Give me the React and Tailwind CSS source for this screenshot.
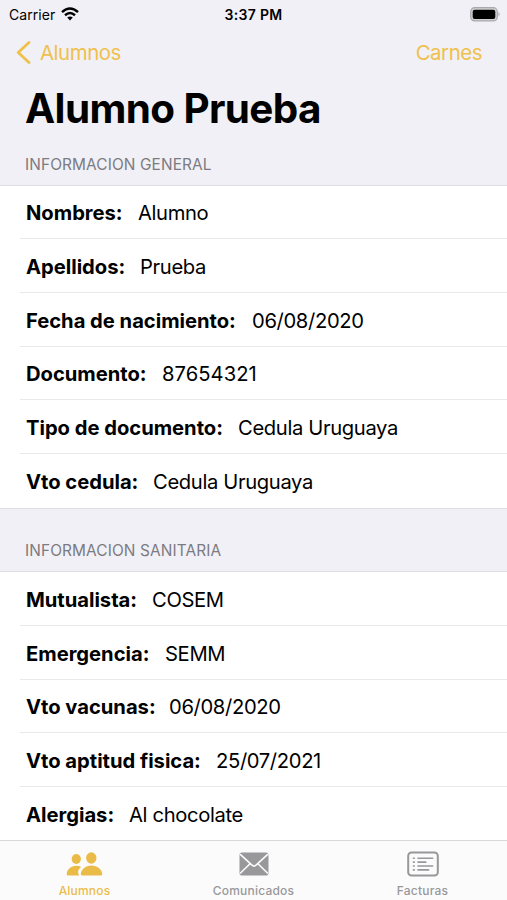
const general = [
  { label: "Nombres:", value: "Alumno", width: "w-[112px]" },
  { label: "Apellidos:", value: "Prueba", width: "w-[114px]" },
  { label: "Fecha de nacimiento:", value: "06/08/2020", width: "w-[226px]" },
  { label: "Documento:", value: "87654321", width: "w-[136px]", spacing: "tracking-[0.05px]" },
  { label: "Tipo de documento:", value: "Cedula Uruguaya", width: "w-[212px]" },
  { label: "Vto cedula:", value: "Cedula Uruguaya", width: "w-[127px]" },
];

const health = [
  { label: "Mutualista:", value: "COSEM", width: "w-[126px]" },
  { label: "Emergencia:", value: "SEMM", width: "w-[139px]" },
  { label: "Vto vacunas:", value: "06/08/2020", width: "w-[143px]" },
  { label: "Vto aptitud fisica:", value: "25/07/2021", width: "w-[190px]" },
  { label: "Alergias:", value: "Al chocolate", width: "w-[103px]" },
];

function Row({ label, value, width, last, spacing = "tracking-[-0.35px]" }) {
  return (
    <div className="h-[53.7px] shrink-0 pl-5">
      <div className={`flex h-full items-center pl-[6px] pt-[3px] text-[20.2px] ${last ? "" : "border-b border-[#e9e9eb]"}`}>
        <span className={`${width} shrink-0 whitespace-nowrap font-bold tracking-[-0.02px]`}>{label}</span>
        <span className={`whitespace-nowrap ${spacing}`}>{value}</span>
      </div>
    </div>
  );
}

function Rows({ items }) {
  return (
    <div className="flex flex-col border-y border-[#dedee2] bg-white">
      {items.map((item, i) => (
        <Row key={item.label} {...item} last={i === items.length - 1} />
      ))}
    </div>
  );
}

function Tab({ label, color, children }) {
  return (
    <div className={`flex flex-1 flex-col items-center pt-[8px] ${color}`}>
      <div className="flex h-[30px] items-center justify-center">{children}</div>
      <span className="mt-[4px] text-[12px] font-medium leading-[16px] tracking-[0.2px]">{label}</span>
    </div>
  );
}

export default function App() {
  return (
    <div className="flex h-[900px] w-[507px] flex-col overflow-hidden bg-[#f1f0f6] font-['Inter','Liberation_Sans',sans-serif] text-black">
      <div className="grid h-[28px] shrink-0 grid-cols-3 items-center pl-[7px] pr-[7px] text-[14px]">
        <div className="flex items-center gap-[6px] pl-[2px]">
          <span className="tracking-[0.05px]">Carrier</span>
          <svg width="18" height="14" viewBox="0 0 18 14" fill="none" stroke="currentColor" strokeWidth="2.5">
            <path d="M1 5.1Q9-2.1 17 5.1M4 8.3Q9 3.8 14 8.3" />
            <path d="M6.2 10.6Q9 8.4 11.8 10.6L9 13.5Z" fill="currentColor" stroke="none" />
          </svg>
        </div>
        <span className="text-center font-semibold tracking-[0.3px]">3:37 PM</span>
        <svg className="justify-self-end" width="30" height="15" viewBox="0 0 30 15">
          <rect x=".7" y=".7" width="26.6" height="13.2" rx="4" fill="#d0d0d3" stroke="#a9a9ad" strokeWidth="1.2" />
          <rect x="2.7" y="2.7" width="22.6" height="9.2" rx="2" />
          <path d="M28.5 5.1Q30.8 7.3 28.5 9.5Z" fill="#a9a9ad" />
        </svg>
      </div>
      <div className="flex h-[49px] shrink-0 items-center justify-between pl-4 pr-[25px] pt-[1px] text-[20.4px] tracking-[-0.45px] text-[#efc04c]">
        <div className="flex items-center gap-[9px]">
          <svg width="15" height="24" viewBox="0 0 15 24" fill="none" stroke="currentColor" strokeWidth="2.8" strokeLinecap="round" strokeLinejoin="round">
            <path d="M13 1.5 2.2 11.5 13 21.5" />
          </svg>
          <span>Alumnos</span>
        </div>
        <span>Carnes</span>
      </div>
      <h1 className="h-[65px] shrink-0 pl-[25px] text-[40.4px] font-bold leading-[64px] tracking-[-0.6px]">Alumno Prueba</h1>
      <h2 className="h-[42.5px] shrink-0 pl-[25px] pt-[11.5px] text-[15.4px] leading-[22px] tracking-[0.12px] text-[#7c7b81]">INFORMACION GENERAL</h2>
      <Rows items={general} />
      <h2 className="h-[62.6px] shrink-0 pl-[25px] pt-[31.5px] text-[15.4px] leading-[22px] tracking-[0.12px] text-[#7c7b81]">INFORMACION SANITARIA</h2>
      <div className="min-h-0 flex-1 overflow-hidden">
        <Rows items={health} />
      </div>
      <div className="flex h-[60px] shrink-0 border-t border-[#d9d9dc] bg-[#fbfbfc]">
        <Tab label="Alumnos" color="text-[#ebbb48]">
          <svg width="37" height="26" viewBox="0 0 37 26" fill="currentColor">
            <ellipse cx="10.3" cy="8" rx="4.6" ry="5" />
            <path d="M.7 23.2C.7 18.8 5 14.8 10.4 14.8Q13.2 14.8 15.2 16.1C12.4 18.3 11 21 13.2 24.6H2Q.7 24.6.7 23.2Z" />
            <ellipse cx="25.3" cy="7" rx="5.2" ry="5.7" />
            <path d="M14.8 23.1C14.8 18.5 19.4 14.4 25.4 14.4S36.2 18.5 36.2 23.1Q36.2 24.6 34.7 24.6H16.3Q14.8 24.6 14.8 23.1Z" />
          </svg>
        </Tab>
        <Tab label="Comunicados" color="text-[#98989a]">
          <svg width="30" height="24" viewBox="0 0 30 24">
            <rect x=".5" y=".5" width="29" height="23" rx="2.2" fill="currentColor" />
            <path d="M1 2.2 13 13.2Q15 15 17 13.2L29 2.2M1 21.5 10.8 12M29 21.5 19.2 12" fill="none" stroke="#fbfbfc" strokeWidth="1.6" />
          </svg>
        </Tab>
        <Tab label="Facturas" color="text-[#98989a]">
          <svg width="32" height="26" viewBox="0 0 32 26" fill="none" stroke="currentColor" strokeWidth="1.6">
            <rect x="1.2" y="1.5" width="29.6" height="23" rx="3.3" strokeWidth="2" />
            <path d="M10.4 7.2h15.8M10.4 11.1h9M10.4 15h15.8M10.4 18.9h11.8M5.8 7.2h2M5.8 11.1h2M5.8 15h2M5.8 18.9h2" />
          </svg>
        </Tab>
      </div>
    </div>
  );
}
